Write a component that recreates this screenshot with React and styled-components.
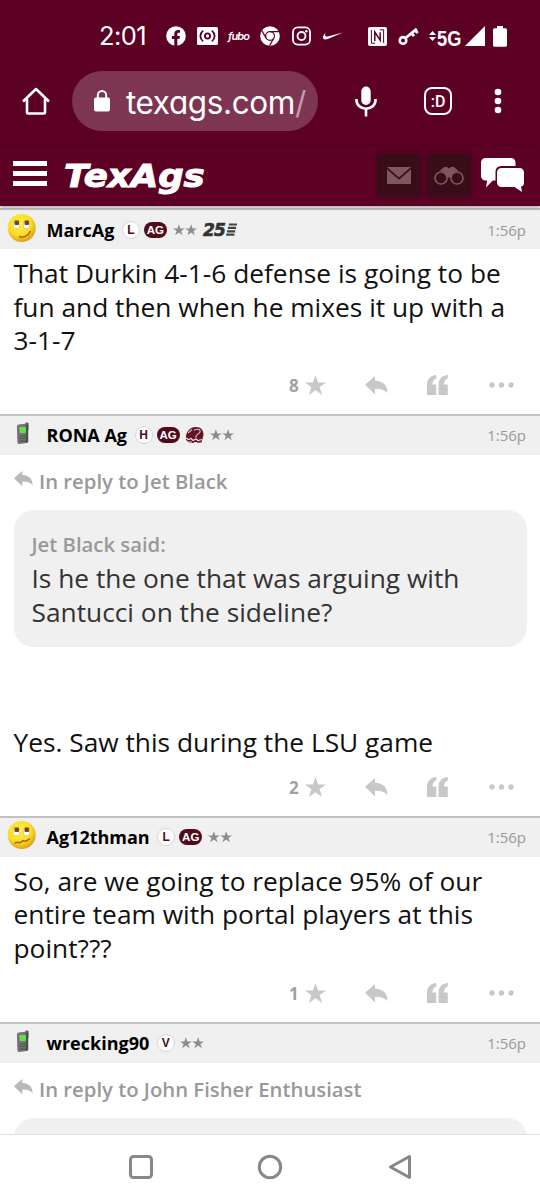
import React from "react";
import styled, { createGlobalStyle } from "styled-components";

const posts = [
    {
        id: 1,
        author: "MarcAg",
        avatar: "smile",
        badges: ["L", "AG"],
        stars: true,
        years: "25",
        time: "1:56p",
        text: ["That Durkin 4-1-6 defense is going to be", "fun and then when he mixes it up with a", "3-1-7"],
        likes: 8,
    },
    {
        id: 2,
        author: "RONA Ag",
        avatar: "phone",
        badges: ["H", "AG", "helmet"],
        stars: true,
        time: "1:56p",
        replyTo: "Jet Black",
        quote: ["Is he the one that was arguing with", "Santucci on the sideline?"],
        text: ["Yes. Saw this during the LSU game"],
        likes: 2,
    },
    {
        id: 3,
        author: "Ag12thman",
        avatar: "worried",
        badges: ["L", "AG"],
        stars: true,
        time: "1:56p",
        text: ["So, are we going to replace 95% of our", "entire team with portal players at this", "point???"],
        likes: 1,
    },
    {
        id: 4,
        author: "wrecking90",
        avatar: "phone",
        badges: ["V"],
        stars: true,
        time: "1:56p",
        replyTo: "John Fisher Enthusiast",
    },
];

function StatusBar() {
    return (
        <StatusStyled>
            <Clock>2:01</Clock>
            <StatusIcon $left={17} width="20" height="20" viewBox="0 0 20 20">
                <circle cx="10" cy="10" r="9.8" fill="#fff" />
                <path d="M8.3 20v-7H5.9v-2.9h2.4V8c0-2.6 1.5-4 3.8-4 1 0 1.9.2 1.9.2v2.5h-1.2c-1.2 0-1.5.7-1.5 1.5v1.9h2.6l-.5 2.9h-2.1v7z" fill="#5c0024" />
            </StatusIcon>
            <StatusIcon $left={11} width="21" height="18" viewBox="0 0 21 18">
                <rect width="21" height="18" rx="1.5" fill="#fff" />
                <g fill="none" stroke="#5c0024" strokeWidth="1.8">
                    <circle cx="10.5" cy="9" r="2.6" />
                    <path d="M6.2 3.6c-3.8 3-3.8 7.8 0 10.8M14.8 3.6c3.8 3 3.8 7.8 0 10.8" />
                </g>
            </StatusIcon>
            <Fubo>fubo</Fubo>
            <StatusIcon $left={10} width="20" height="20" viewBox="0 0 20 20">
                <circle cx="10" cy="10" r="9.8" fill="#fff" />
                <g fill="none" stroke="#5c0024" strokeWidth="1.2">
                    <circle cx="10" cy="10" r="4.4" />
                    <path d="M10 5.6h9M6.2 12.2 1.8 4.6M13.8 12.2 9.5 19.6" />
                </g>
            </StatusIcon>
            <StatusIcon $left={12} width="19" height="20" viewBox="0 0 20 20">
                <g fill="none" stroke="#fff" strokeWidth="1.9">
                    <rect x="1" y="1" width="18" height="18" rx="5" />
                    <circle cx="10" cy="10" r="4.2" />
                </g>
                <circle cx="15.1" cy="4.9" r="1.3" fill="#fff" />
            </StatusIcon>
            <StatusIcon $left={12} width="20" height="20" viewBox="0 0 24 24">
                <path d="M24 7.8L6.442 15.276c-1.456.616-2.679.925-3.668.925-1.12 0-1.933-.392-2.437-1.177-.317-.504-.41-1.143-.28-1.918.13-.775.476-1.6 1.036-2.478.467-.71 1.232-1.643 2.297-2.8a6.122 6.122 0 00-.784 1.848c-.28 1.195-.028 2.072.756 2.632.373.261.886.392 1.54.392.522 0 1.11-.084 1.764-.252L24 7.8z" fill="#fff" />
            </StatusIcon>
            <StatusIcon $left={25} width="19" height="19" viewBox="0 0 19 19">
                <rect width="19" height="19" rx="2" fill="#fff" />
                <path d="M7.2 16.2H3.4V3M11.8 2.8h3.8v13.2" fill="none" stroke="#5c0024" strokeWidth="1" />
                <path d="M6.8 14V5L12.2 13.200V5.200" fill="none" stroke="#5c0024" strokeWidth="1.500" />
            </StatusIcon>
            <StatusIcon $left={11} width="21" height="19" viewBox="0 0 21 19">
                <g fill="none" stroke="#fff">
                    <circle cx="5" cy="13.4" r="3.3" strokeWidth="2.6" />
                    <path d="M7.6 11 18.8 1.8M13.6 6.2l2.4 3M17.2 3.2l2.4 3" strokeWidth="2.8" />
                </g>
            </StatusIcon>
            <StatusIcon $left={10} width="7" height="10" viewBox="0 0 7 10">
                <path d="M3.5 0 7 4H0zM3.5 10 7 6H0z" fill="#fff" />
            </StatusIcon>
            <Network>5G</Network>
            <StatusIcon $left={3} width="20" height="20" viewBox="0 0 20 20">
                <path d="M20 0v20H0z" fill="#fff" />
            </StatusIcon>
            <StatusIcon $left={8} width="14" height="21" viewBox="0 0 14 21">
                <path d="M4 0h6v2.2h2.5A1.5 1.5 0 0 1 14 3.7v15.6a1.5 1.5 0 0 1-1.5 1.5h-11A1.5 1.5 0 0 1 0 19.3V3.7a1.5 1.5 0 0 1 1.5-1.5H4z" fill="#fff" />
            </StatusIcon>
        </StatusStyled>
    );
}

function BrowserBar() {
    return (
        <BrowserStyled>
            <svg width="28" height="28" viewBox="0 0 28 28">
                <path d="M1 14.5 14 2l13 12.5M5 12V25.5a1 1 0 0 0 1 1h16a1 1 0 0 0 1-1V12" fill="none" stroke="#fff" strokeWidth="2.6" strokeLinejoin="round" />
            </svg>
            <Address>
                <svg width="16" height="22" viewBox="0 0 16 22">
                    <rect y="7.5" width="16" height="14" rx="2" fill="#fff" />
                    <path d="M3.8 8.5V5.3a4.2 4.2 0 0 1 8.4 0v3.2" fill="none" stroke="#fff" strokeWidth="2" />
                </svg>
                <Url>texags.com<em>/</em></Url>
            </Address>
            <MicIcon width="22" height="31" viewBox="0 0 22 31">
                <rect x="6.3" y="0.5" width="9.4" height="18.5" rx="4.7" fill="#fff" />
                <path d="M1.5 13v1.2a9.5 8.5 0 0 0 19 0V13M11 23V30.5" fill="none" stroke="#fff" strokeWidth="2.6" />
            </MicIcon>
            <TabCount>:D</TabCount>
            <svg width="8" height="28" viewBox="0 0 8 28">
                <g fill="#fff">
                    <circle cx="4" cy="5" r="3.3" />
                    <circle cx="4" cy="14" r="3.3" />
                    <circle cx="4" cy="23" r="3.3" />
                </g>
            </svg>
        </BrowserStyled>
    );
}

function SiteHeader() {
    return (
        <SiteStyled>
            <Burger><i /><i /><i /></Burger>
            <Logo>TexAgs</Logo>
            <HeaderTile>
                <svg width="24" height="17" viewBox="0 0 24 17">
                    <path d="M0 0h24L12 10.5z" fill="#7d5661" />
                    <path d="M0 2.3l12 10.5L24 2.3V17H0z" fill="#7d5661" />
                </svg>
            </HeaderTile>
            <HeaderTile>
                <svg width="30" height="18" viewBox="0 0 30 18">
                    <g fill="none" stroke="#7d5661" strokeWidth="1.7">
                        <circle cx="7" cy="11" r="6" />
                        <circle cx="23" cy="11" r="6" />
                    </g>
                    <path d="M5.5 4 10 0h3l2 1.5L17 0h3l4.5 4c-4 .2-6.5 2.5-7.2 6.5h-4.6C12 6.5 9.5 4.2 5.5 4z" fill="#7d5661" />
                </svg>
            </HeaderTile>
            <ChatIcon width="43" height="36" viewBox="0 0 43 36">
                <path d="M4.5 1h25.5a4.5 4.5 0 0 1 4.5 4.5V9H20a5.5 5.5 0 0 0-5.5 5.5V23.5h-2.7L5 30.5l1.2-7H4.5A4.5 4.5 0 0 1 0 19V5.5A4.5 4.5 0 0 1 4.5 1z" fill="#fff" />
                <path d="M20.5 11H38.5a4.5 4.5 0 0 1 4.5 4.5v10a4.5 4.5 0 0 1-3 4.3l1 5.2-7.5-5h-13a4.5 4.5 0 0 1-4.5-4.5v-10a4.5 4.5 0 0 1 4.5-4.5z" fill="#fff" />
            </ChatIcon>
        </SiteStyled>
    );
}

function Face({ worried }) {
    return (
        <svg width="30" height="30" viewBox="0 0 30 30">
            <defs>
                <radialGradient id="face" cx="0.42" cy="0.35" r="0.65">
                    <stop offset="0" stopColor="#fff04a" />
                    <stop offset="0.65" stopColor="#f9dc25" />
                    <stop offset="1" stopColor="#dda117" />
                </radialGradient>
            </defs>
            <circle cx="14.7" cy="15" r="14" fill="url(#face)" />
            <g fill="#fff" stroke="#d8b23a" strokeWidth="0.5">
                <rect x="6.5" y="7.5" width="6" height="8" rx="1.5" />
                <rect x="16.5" y="7.5" width="6" height="8" rx="1.5" />
            </g>
            <g fill="#6e4a22">
                <rect x="7.5" y="7.5" width="4.5" height="4.5" rx="1" />
                <rect x="17.5" y="7.5" width="4.500" height="4.500" rx="1" />
            </g>
            {worried
                ? <path d="M7.5 23l3-.8 2.500.6 3-2 3 .4 4-2.700" fill="none" stroke="#b0600c" strokeWidth="1.500" />
                : <path d="M12 23.500c4 1.500 9 0 11.500-5.500" fill="none" stroke="#b0600c" strokeWidth="1.600" />}
        </svg>
    );
}

function Phone() {
    return (
        <svg width="30" height="30" viewBox="0 0 30 30">
            <rect x="18.5" y="4.5" width="3" height="8" rx="1" fill="#5c5f5c" />
            <path d="M11.5 6.5 19.5 5.5a1.5 1.5 0 0 1 1.6 1.5l.2 16a2 2 0 0 1-1.8 2l-7 .9a2 2 0 0 1-2.2-2L9.9 8.5a2 2 0 0 1 1.6-2z" fill="#747774" />
            <path d="M18.5 7l2.6-1v18l-2.6 1z" fill="#4d504d" />
            <rect x="12.5" y="9" width="6.5" height="6" rx="0.8" fill="#62e04c" />
            <path d="M12.5 18h5.5M12.5 20.5h5.5M12.5 23h5.5" stroke="#4c504d" strokeWidth="1" />
        </svg>
    );
}

function Helmet() {
    return (
        <svg width="19" height="18" viewBox="0 0 19 18">
            <path d="M1 14C0 7 4 1 11 1c5 0 7.5 3.5 7.5 8l-2 7.5L5 17z" fill="#641327" />
            <path d="M3 7 7 3.5M9 4.5c3-2.5 7-1 6 1.5s-5 2.5-4 6" fill="none" stroke="#d9b8bf" strokeWidth="1.1" />
            <path d="M1 12l2.500 1.500L6 12.500l2 2 3-1.500 2 1.500 4-1M4 16h3M9 16.500h3" fill="none" stroke="#efe0e3" strokeWidth="1.200" />
        </svg>
    );
}

function Badge({ kind }) {
    if (kind === "helmet") return <HelmetBox><Helmet /></HelmetBox>;
    if (kind === "AG") return <ClassBadge>AG</ClassBadge>;
    return <LetterBadge>{kind}</LetterBadge>;
}

const starPath = "M10.5 0l2.6 7.6H21l-6.4 4.7 2.5 7.7-6.6-4.8L3.9 20l2.5-7.7L0 7.6h7.9z";

function Stars() {
    return (
        <StarsSvg width="24" height="12" viewBox="0 0 43 21">
            <path d={starPath} />
            <path d={starPath} transform="translate(22 0)" />
        </StarsSvg>
    );
}

function ReplyArrow({ size = 23 }) {
    return (
        <svg width={size} height={size * 0.83} viewBox="0 0 23 19">
            <path d="M0 8.8 10 0v4.8c8 .4 12.5 4.5 12.5 12.2-3.3-3.5-7-4.5-12.5-4.3V18.5z" />
        </svg>
    );
}

function Actions({ likes }) {
    return (
        <ActionsStyled>
            <Likes>{likes}</Likes>
            <svg width="21" height="20" viewBox="0 0 21 20"><path d={starPath} /></svg>
            <Action $left={39}><ReplyArrow /></Action>
            <Action $left={39}>
                <svg width="21" height="20" viewBox="0 0 21 20">
                    <path d="M9.3 0v3.5C7 4 5.5 6 5.5 9.5h3.8V20H0V10C0 4 3.5.5 9.3 0zM20.8 0v3.5C18.5 4 17 6 17 9.5h3.8V20H11.5V10C11.5 4 15 .5 20.8 0z" />
                </svg>
            </Action>
            <Action $left={41}>
                <svg width="25" height="6" viewBox="0 0 25 6">
                    <circle cx="3" cy="3" r="2.7" />
                    <circle cx="12.5" cy="3" r="2.7" />
                    <circle cx="22" cy="3" r="2.7" />
                </svg>
            </Action>
        </ActionsStyled>
    );
}

function Post({ post }) {
    const { author, avatar, badges, stars, years, time, replyTo, quote, text, likes } = post;
    return (
        <article>
            <PostHeader>
                <Avatar>{avatar === "phone" ? <Phone /> : <Face worried={avatar === "worried"} />}</Avatar>
                <Author>{author}</Author>
                {badges.map((b) => <Badge key={b} kind={b} />)}
                {stars && <Stars />}
                {years && (
                    <Years>
                        {years}
                        <svg width="11" height="13" viewBox="0 0 11 13">
                            <path d="M2.8 1.5H11M1.9 4.9H10.1M1 8.3H9.2M.2 11.7H8.4" stroke="#444" strokeWidth="2.2" />
                        </svg>
                    </Years>
                )}
                <Time>{time}</Time>
            </PostHeader>
            <PostBody>
                {replyTo && <ReplyLine><ReplyArrow size={19} /><span>In reply to {replyTo}</span></ReplyLine>}
                {replyTo && (
                    <Quote>
                        {quote && <QuoteAuthor>{replyTo} said:</QuoteAuthor>}
                        {quote && quote.map((line, i) => <QuoteLine key={i}>{line}</QuoteLine>)}
                    </Quote>
                )}
                {text && (
                    <Message>
                        {text.map((line, i) => <p key={i}>{line}</p>)}
                    </Message>
                )}
                {likes && <Actions likes={likes} />}
            </PostBody>
        </article>
    );
}

function App() {
    return (
        <Screen>
            <GlobalStyle />
            <StatusBar />
            <BrowserBar />
            <SiteHeader />
            <Feed>
                {posts.map((post) => <Post key={post.id} post={post} />)}
            </Feed>
            <NavBar>
                <svg width="26" height="26" viewBox="0 0 26 26"><rect x="2.5" y="2.5" width="21" height="21" rx="3" /></svg>
                <svg width="26" height="26" viewBox="0 0 26 26"><circle cx="13" cy="13" r="10.7" /></svg>
                <svg width="26" height="26" viewBox="0 0 26 26"><path d="M4.500 13 23.500 2.500v21z" /></svg>
            </NavBar>
        </Screen>
    );
}

const GlobalStyle = createGlobalStyle`
    * {
        box-sizing: border-box;
        margin: 0;
        padding: 0;
    }
    body {
        background: #fff;
        font-family: "Open Sans", sans-serif;
    }
    svg {
        display: block;
        flex: none;
    }
`;

const Screen = styled.div`
    display: flex;
    flex-direction: column;
    width: 540px;
    height: 1200px;
    overflow: hidden;
    background: #fff;
`;

const StatusStyled = styled.div`
    display: flex;
    align-items: center;
    height: 62px;
    padding: 10px 0 0 99px;
    background: #5c0024;
    flex: none;
`;

const Clock = styled.span`
    width: 50px;
    font-family: Inter, sans-serif;
    font-size: 25.5px;
    line-height: 34px;
    font-weight: 400;
    letter-spacing: -0.6px;
    white-space: nowrap;
    color: #fff;
`;

const StatusIcon = styled.svg`
    margin-left: ${(p) => p.$left}px;
`;

const Fubo = styled.span`
    width: 22px;
    margin-left: 10px;
    font-family: Inter, sans-serif;
    font-size: 11px;
    line-height: 16px;
    font-style: italic;
    font-weight: 600;
    letter-spacing: -0.9px;
    white-space: nowrap;
    color: #fff;
`;

const Network = styled.span`
    width: 25px;
    height: 26px;
    margin: 6px 0 0 1px;
    font-family: "Liberation Sans", sans-serif;
    font-size: 21.5px;
    line-height: 26px;
    font-weight: 700;
    white-space: nowrap;
    color: #fff;
    transform: scaleX(0.85);
    transform-origin: left center;
`;

const BrowserStyled = styled.div`
    display: flex;
    align-items: center;
    height: 83px;
    padding: 0 0 5px 22px;
    background: #5c0024;
    flex: none;
    > svg:last-child {
        margin-left: 42px;
    }
`;

const Address = styled.div`
    display: flex;
    align-items: center;
    width: 246px;
    height: 60px;
    margin-left: 22px;
    padding-left: 22px;
    border-radius: 30px;
    background: #7d3552;
`;

const Url = styled.span`
    margin: 4px 0 0 16px;
    font-family: Inter, sans-serif;
    font-feature-settings: "cv11";
    font-size: 31.5px;
    line-height: 40px;
    letter-spacing: -0.4px;
    white-space: nowrap;
    color: #fff;
    em {
        font-style: normal;
        color: #c39aaa;
    }
`;

const MicIcon = styled.svg`
    margin-left: 37px;
`;

const TabCount = styled.div`
    display: flex;
    align-items: center;
    justify-content: center;
    width: 28px;
    height: 28px;
    margin-left: 47px;
    border: 2.6px solid #fff;
    border-radius: 8px;
    font-family: Roboto, sans-serif;
    font-size: 16px;
    font-weight: 500;
    color: #fff;
`;

const SiteStyled = styled.header`
    display: flex;
    align-items: center;
    height: 61px;
    padding-left: 13px;
    background: #5c0024;
    box-shadow: 0 1px 4px rgba(0, 0, 0, 0.45);
    flex: none;
    z-index: 1;
`;

const Burger = styled.div`
    display: flex;
    flex-direction: column;
    gap: 5px;
    width: 34px;
    margin-bottom: 5px;
    i {
        height: 5px;
        background: #fff;
    }
`;

const Logo = styled.span`
    width: 142px;
    margin: 0 171px 0 17px;
    font-family: "DejaVu Sans", sans-serif;
    font-size: 32px;
    line-height: 44px;
    font-weight: 700;
    font-style: italic;
    white-space: nowrap;
    color: #fff;
    -webkit-text-stroke: 1px #fff;
    transform: scaleX(1.11);
    transform-origin: left center;
`;

const HeaderTile = styled.div`
    display: flex;
    align-items: center;
    justify-content: center;
    width: 44px;
    height: 43px;
    margin-right: 6px;
    background: #3a0c19;
    box-shadow: 0 0 3px #3a0c19;
`;

const ChatIcon = styled.svg`
    margin: 0 0 2px 4px;
`;

const Feed = styled.main`
    flex: 1;
    padding-top: 2px;
    overflow: hidden;
`;

const PostHeader = styled.div`
    display: flex;
    align-items: center;
    height: 41px;
    padding: 0 14px 0 7px;
    border-top: 2px solid #c3c3c3;
    background: #f0f0f0;
`;

const Avatar = styled.div`
    width: 30px;
    height: 30px;
    margin: -4px 9.5px 0 0;
`;

const Author = styled.span`
    margin-right: 7.5px;
    font-size: 18px;
    font-weight: 700;
    color: #000;
    white-space: nowrap;
`;

const LetterBadge = styled.span`
    display: flex;
    align-items: center;
    justify-content: center;
    width: 18px;
    height: 18px;
    margin-right: 4px;
    border: 1px solid #d5d5d5;
    border-radius: 50%;
    background: #fff;
    font-family: "Liberation Sans", sans-serif;
    font-size: 12px;
    font-weight: 700;
    color: #500c1c;
`;

const ClassBadge = styled(LetterBadge)`
    width: 23px;
    height: 16px;
    border: none;
    border-radius: 8px;
    background: #500c1c;
    color: #fff;
    margin-right: 5px;
    font-size: 11.5px;
`;

const HelmetBox = styled.span`
    margin-right: 5px;
`;

const StarsSvg = styled.svg`
    fill: #8c8c8c;
    margin-left: 1px;
`;

const Years = styled.span`
    display: flex;
    align-items: center;
    gap: 1px;
    margin-left: 6px;
    font-family: "DejaVu Sans", sans-serif;
    font-size: 17px;
    font-weight: 700;
    font-style: italic;
    letter-spacing: -0.8px;
    color: #333;
    -webkit-text-stroke: 0.6px #333;
`;

const Time = styled.span`
    margin-left: auto;
    font-size: 15px;
    color: #999;
`;

const PostBody = styled.div`
    padding: 8px 13.5px 0;
`;

const ReplyLine = styled.div`
    display: flex;
    gap: 6.5px;
    height: 47px;
    padding-top: 7px;
    font-size: 20.3px;
    line-height: 22px;
    font-weight: 600;
    color: #999;
    white-space: nowrap;
    svg {
        margin-top: 1px;
        fill: #b8b8b8;
    }
`;

const Quote = styled.blockquote`
    height: 137px;
    margin-bottom: 79.4px;
    padding: 18px;
    border-radius: 20px;
    background: #f0f0f0;
`;

const QuoteAuthor = styled.div`
    font-size: 20.3px;
    line-height: 33px;
    padding-bottom: 1.5px;
    font-weight: 600;
    color: #999;
`;

const QuoteLine = styled.p`
    font-size: 26.3px;
    line-height: 33.6px;
    color: #333;
    white-space: nowrap;
`;

const Message = styled.div`
    p {
        font-size: 26.3px;
        line-height: 33.6px;
        color: #111;
        white-space: nowrap;
    }
`;

const ActionsStyled = styled.div`
    display: flex;
    align-items: center;
    height: 56px;
    padding: 0 0 1px 275.5px;
    fill: #c8c8c8;
`;

const Likes = styled.span`
    width: 16px;
    font-size: 17px;
    font-weight: 700;
    color: #a0a0a0;
`;

const Action = styled.span`
    margin-left: ${(p) => p.$left}px;
`;

const NavBar = styled.nav`
    display: flex;
    justify-content: center;
    align-items: center;
    gap: 103px;
    height: 66px;
    padding-bottom: 2px;
    border-top: 1px solid #ddd;
    background: #fff;
    flex: none;
    svg {
        fill: none;
        stroke: #888;
        stroke-width: 3;
        stroke-linejoin: round;
    }
`;

export default App;
